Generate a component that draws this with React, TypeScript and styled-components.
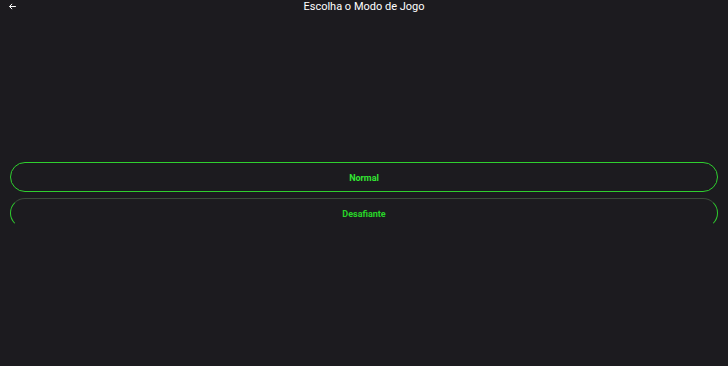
import React from "react";
import styled, { createGlobalStyle } from "styled-components";

const Global = createGlobalStyle`
  html, body { margin: 0; padding: 0; background: #1c1b1f; }
  body { font-family: Roboto, "Noto Sans", sans-serif; }
`;

const Page = styled.div`
  width: 728px;
  height: 366px;
  background: #1c1b1f;
  display: flex;
  flex-direction: column;
  overflow: hidden;
`;

const TopBar = styled.header`
  height: 24px;
  position: relative;
  display: flex;
  justify-content: center;
  align-items: flex-start;
`;

const BackButton = styled.button`
  position: absolute;
  left: 7px;
  top: 1px;
  width: 10px;
  height: 10px;
  padding: 0;
  border: none;
  background: transparent;
  color: #ffffff;
  display: flex;
  align-items: center;
  justify-content: center;
`;

const Title = styled.h1`
  margin: 0;
  font-size: 11px;
  font-weight: 400;
  line-height: 13px;
  color: #ffffff;
`;

const Main = styled.main`
  flex: 1;
  display: flex;
  flex-direction: column;
  justify-content: center;
  gap: 6px;
  padding: 0 10px;
`;

const ModeButton = styled.button<{ $dim?: boolean }>`
  height: 30px;
  width: 100%;
  border-radius: 15px;
  border: 1px solid #2fcf2f;
  border-top-color: ${(p) => (p.$dim ? "#3a4a3a" : "#2fcf2f")};
  border-bottom-color: ${(p) => (p.$dim ? "transparent" : "#2fcf2f")};
  background: transparent;
  color: ${(p) => (p.$dim ? "#28d428" : "#33e633")};
  font-family: Roboto, sans-serif;
  font-size: 9px;
  font-weight: 700;
  padding: 1px 0 0;
  cursor: pointer;
`;

export default function App() {
  return (
    <Page>
      <Global />
      <TopBar>
        <BackButton aria-label="Voltar">
          <svg width="9" height="9" viewBox="0 0 24 24" fill="none" stroke="#fff" strokeWidth="2.6">
            <path d="M21 12H4M11 5l-7 7 7 7" />
          </svg>
        </BackButton>
        <Title>Escolha o Modo de Jogo</Title>
      </TopBar>
      <Main>
        <ModeButton>Normal</ModeButton>
        <ModeButton $dim>Desafiante</ModeButton>
      </Main>
    </Page>
  );
}
